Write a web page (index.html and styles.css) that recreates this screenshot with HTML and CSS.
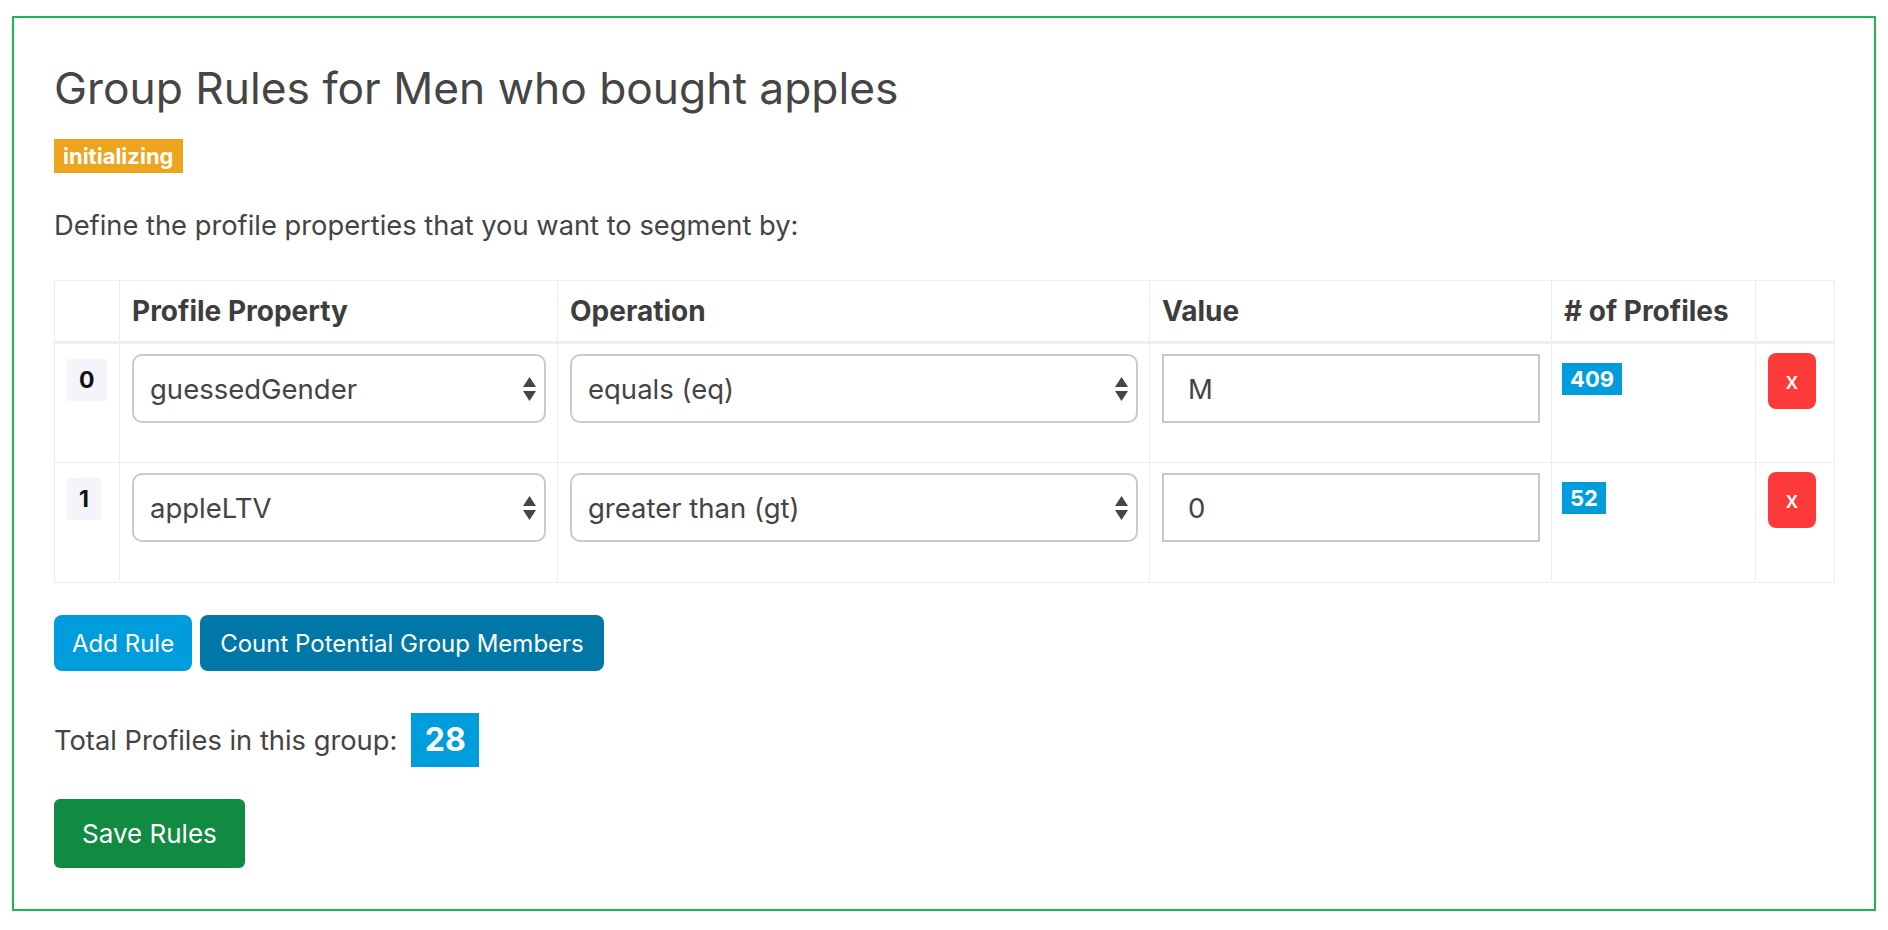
FILE: index.html
```html
<!DOCTYPE html>
<html lang="en">
<head>
<meta charset="utf-8">
<title>Group Rules</title>
<link rel="stylesheet" href="styles.css">
</head>
<body>
<div class="panel">
  <h1 class="title">Group Rules for Men who bought apples</h1>
  <span class="status">initializing</span>
  <p class="lead">Define the profile properties that you want to segment by:</p>
  <table class="rules">
    <colgroup>
      <col class="w-idx"><col class="w-prop"><col class="w-op"><col class="w-val"><col class="w-count"><col class="w-del">
    </colgroup>
    <thead>
      <tr><th></th><th>Profile Property</th><th>Operation</th><th>Value</th><th># of Profiles</th><th></th></tr>
    </thead>
    <tbody>
      <tr>
        <td><span class="idx">0</span></td>
        <td><div class="select"><span>guessedGender</span><svg class="arrows" width="13" height="24" viewBox="0 0 13 24"><path d="M6.5 0 L13 10 L0 10 Z M0 14 L13 14 L6.5 24 Z" fill="#454545"/></svg></div></td>
        <td><div class="select"><span>equals (eq)</span><svg class="arrows" width="13" height="24" viewBox="0 0 13 24"><path d="M6.5 0 L13 10 L0 10 Z M0 14 L13 14 L6.5 24 Z" fill="#454545"/></svg></div></td>
        <td><div class="input">M</div></td>
        <td class="cell-count"><span class="count">409</span></td>
        <td><button class="del">x</button></td>
      </tr>
      <tr>
        <td><span class="idx">1</span></td>
        <td><div class="select"><span>appleLTV</span><svg class="arrows" width="13" height="24" viewBox="0 0 13 24"><path d="M6.5 0 L13 10 L0 10 Z M0 14 L13 14 L6.5 24 Z" fill="#454545"/></svg></div></td>
        <td><div class="select"><span>greater than (gt)</span><svg class="arrows" width="13" height="24" viewBox="0 0 13 24"><path d="M6.5 0 L13 10 L0 10 Z M0 14 L13 14 L6.5 24 Z" fill="#454545"/></svg></div></td>
        <td><div class="input">0</div></td>
        <td class="cell-count"><span class="count">52</span></td>
        <td><button class="del">x</button></td>
      </tr>
    </tbody>
  </table>
  <div class="actions">
    <button class="btn btn-info">Add Rule</button>
    <button class="btn btn-primary">Count Potential Group Members</button>
  </div>
  <div class="total">
    <span>Total Profiles in this group:</span>
    <span class="total-badge">28</span>
  </div>
  <button class="btn btn-save">Save Rules</button>
</div>
</body>
</html>
```

FILE: styles.css
```css
* { box-sizing: border-box; }
html, body { margin: 0; padding: 0; background: #fff; }
body {
  font-family: Inter, "Liberation Sans", Arial, sans-serif;
  color: #444;
}
.panel {
  margin: 16px 12px 0 12px;
  height: 895px;
  border: 2px solid #1fb55a;
  padding: 43px 40px 0 40px;
}
.title {
  margin: 0;
  font-size: 44.3px;
  line-height: 54px;
  font-weight: 400;
  color: #454545;
}
.status {
  display: inline-block;
  margin-top: 24px;
  height: 34px;
  line-height: 34px;
  padding: 0 9px;
  background: #efa420;
  color: #fff;
  font-weight: 700;
  font-size: 22px;
}
.lead {
  margin: 32px 0 0 0;
  font-size: 27.3px;
  line-height: 41px;
}
.rules {
  margin-top: 34px;
  width: 1780px;
  table-layout: fixed;
  border-collapse: collapse;
  border: 1px solid #ededed;
}
.w-idx { width: 65px; }
.w-prop { width: 438px; }
.w-op { width: 592px; }
.w-val { width: 402px; }
.w-count { width: 204px; }
.w-del { width: 79px; }
.rules th, .rules td {
  border: 1px solid #ededed;
  text-align: left;
  vertical-align: top;
}
.rules th {
  padding: 13px 12px 12px 12px;
  font-size: 28px;
  line-height: 35px;
  font-weight: 700;
  color: #3d3d3d;
  border-bottom: 3px solid #efefef;
}
.rules td {
  padding: 10px 11px 10px 12px;
  height: 120px;
}
.rules td.cell-count { padding-left: 10px; }
.idx {
  display: inline-block;
  margin-top: 5px;
  height: 42px;
  line-height: 42px;
  padding: 0 12px;
  background: #f4f4fa;
  color: #111;
  font-weight: 700;
  font-size: 23px;
}
.select {
  display: flex;
  align-items: center;
  justify-content: space-between;
  height: 69px;
  border: 2px solid #c9c9ce;
  border-radius: 10px;
  padding: 0 8px 0 16px;
  font-size: 27.5px;
  color: #444;
  background: #fff;
}
.arrows { display: block; flex: none; }
.input {
  height: 69px;
  border: 2px solid #c8c8cc;
  padding: 0 24px;
  display: flex;
  align-items: center;
  font-size: 27.5px;
  color: #444;
}
.count {
  display: inline-block;
  margin-top: 9px;
  height: 32px;
  line-height: 32px;
  padding: 0 8px;
  background: #009ddd;
  color: #fff;
  font-weight: 700;
  font-size: 22px;
}
.del {
  display: block;
  width: 48px;
  height: 56px;
  border: 0;
  border-radius: 8px;
  background: #fd3a3a;
  color: #fff;
  font-family: Inter, "Liberation Sans", Arial, sans-serif;
  font-size: 23px;
  font-weight: 500;
  padding: 0;
  margin-top: -1px;
}
.actions {
  display: flex;
  gap: 8px;
  margin-top: 32px;
}
.btn {
  font-family: Inter, "Liberation Sans", Arial, sans-serif;
  border: 0;
  border-radius: 8px;
  color: #fff;
  height: 56px;
  padding: 0 18px;
  font-size: 24px;
  font-weight: 400;
}
.btn-info { background: #009ddd; }
.btn-primary { background: #0077a7; padding: 0 20px; }
.total {
  display: flex;
  align-items: center;
  gap: 14px;
  margin-top: 42px;
  font-size: 27.3px;
}
.total-badge {
  display: inline-block;
  width: 68px;
  height: 54px;
  line-height: 54px;
  text-align: center;
  background: #009ddd;
  color: #fff;
  font-weight: 700;
  font-size: 32px;
}
.btn-save {
  display: block;
  margin-top: 32px;
  height: 69px;
  padding: 0 28px;
  background: #108b41;
  font-size: 26px;
  border-radius: 6px;
}
```
